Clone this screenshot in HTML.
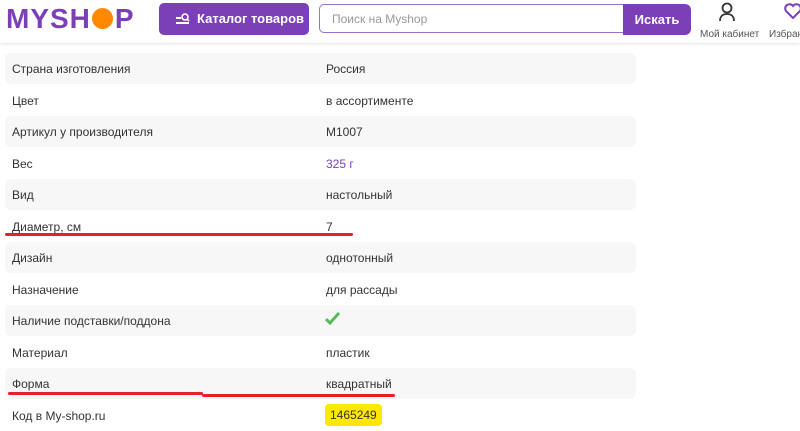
<!DOCTYPE html><html><head><meta charset="utf-8"><style>
body{margin:0;width:800px;height:431px;overflow:hidden;background:#fff;font-family:"Liberation Sans",sans-serif;position:relative}
.hdr{position:absolute;left:0;top:0;width:800px;height:43px;background:#fff;box-shadow:0 1px 3px rgba(0,0,0,.12)}
.logo{position:absolute;left:6px;top:3px;font-size:28px;font-weight:bold;color:#7b3fb8;letter-spacing:1px}
.o{display:inline-block;width:21px;height:21px;border-radius:50%;background:#ff8a00;vertical-align:-1px;margin:0 2px 0 1px}
.cat{position:absolute;left:159px;top:3px;width:150px;height:32px;background:#7b3fb8;border-radius:5px;color:#fff;font-size:13px;font-weight:bold;line-height:32px}
.srch{position:absolute;left:319px;top:4px;width:305px;height:29px;border:1px solid #9b6fd0;border-radius:5px 0 0 5px;border-right:none;font-size:12px;color:#999;line-height:29px;padding-left:12px;box-sizing:border-box}
.btn{position:absolute;left:623px;top:4px;width:68px;height:31px;background:#7b3fb8;border-radius:0 6px 6px 0;color:#fff;font-weight:bold;font-size:13px;line-height:31px;text-align:center}
.ic{position:absolute;top:29px;font-size:10px;color:#555}
.row{position:absolute;left:5px;width:631px;height:31px;border-radius:6px;font-size:12px;color:#333}
.row.s{background:#f7f7f7}
.row span{position:absolute;top:9px}
.k{left:7px}.v{left:321px}
.red{position:absolute;height:3px;background:#e8202a;border-radius:2px}
</style></head><body>
<div class="hdr">
<div class="logo">MYSH<span class="o"></span>P</div>
<div class="cat"><svg style="position:absolute;left:16px;top:10px" width="16" height="12" viewBox="0 0 16 12"><path d="M1 5h5M1 10h13" stroke="#fff" stroke-width="2"/><circle cx="10" cy="4" r="3" fill="none" stroke="#fff" stroke-width="1.6"/><path d="M12 6l2 2" stroke="#fff" stroke-width="1.6"/></svg><span style="position:absolute;left:38px">Каталог товаров</span></div>
<div class="srch">Поиск на Myshop</div>
<div class="btn">Искать</div>
<svg style="position:absolute;left:718px;top:2px" width="18" height="20" viewBox="0 0 18 20"><circle cx="9" cy="6" r="4.5" fill="none" stroke="#333" stroke-width="1.8"/><path d="M2 19c0-5 3-7 7-7s7 2 7 7" fill="none" stroke="#333" stroke-width="1.8"/></svg>
<div class="ic" style="left:700px">Мой кабинет</div>
<svg style="position:absolute;left:784px;top:3px" width="18" height="16" viewBox="0 0 18 16"><path d="M9 15L2 8a4 4 0 0 1 7-5 4 4 0 0 1 7 5z" fill="none" stroke="#7b3fb8" stroke-width="2"/></svg>
<div class="ic" style="left:769px">Избранное</div>
</div>
<div class="row s" style="top:53px"><span class="k">Страна изготовления</span><span class="v">Россия</span></div>
<div class="row" style="top:85px"><span class="k">Цвет</span><span class="v">в ассортименте</span></div>
<div class="row s" style="top:116px"><span class="k">Артикул у производителя</span><span class="v">M1007</span></div>
<div class="row" style="top:148px"><span class="k">Вес</span><span class="v" style="color:#7b3fb8">325 г</span></div>
<div class="row s" style="top:179px"><span class="k">Вид</span><span class="v">настольный</span></div>
<div class="row" style="top:211px"><span class="k">Диаметр, см</span><span class="v">7</span></div>
<div class="row s" style="top:242px"><span class="k">Дизайн</span><span class="v">однотонный</span></div>
<div class="row" style="top:274px"><span class="k">Назначение</span><span class="v">для рассады</span></div>
<div class="row s" style="top:305px"><span class="k">Наличие подставки/поддона</span><svg style="position:absolute;left:320px;top:7px" width="15" height="13" viewBox="0 0 15 13"><path d="M1 7l4 4 9-10" fill="none" stroke="#5cb85c" stroke-width="3"/></svg></div>
<div class="row" style="top:337px"><span class="k">Материал</span><span class="v">пластик</span></div>
<div class="row s" style="top:368px"><span class="k">Форма</span><span class="v">квадратный</span></div>
<div class="row" style="top:400px"><span class="k">Код в My-shop.ru</span><span style="position:absolute;left:320px;top:4px;background:#ffe800;border-radius:4px;padding:4px 5px;color:#333">1465249</span></div>
<div class="red" style="left:5px;top:233px;width:348px"></div>
<div class="red" style="left:8px;top:392px;width:195px"></div>
<div class="red" style="left:202px;top:394px;width:193px"></div>
</body></html>
